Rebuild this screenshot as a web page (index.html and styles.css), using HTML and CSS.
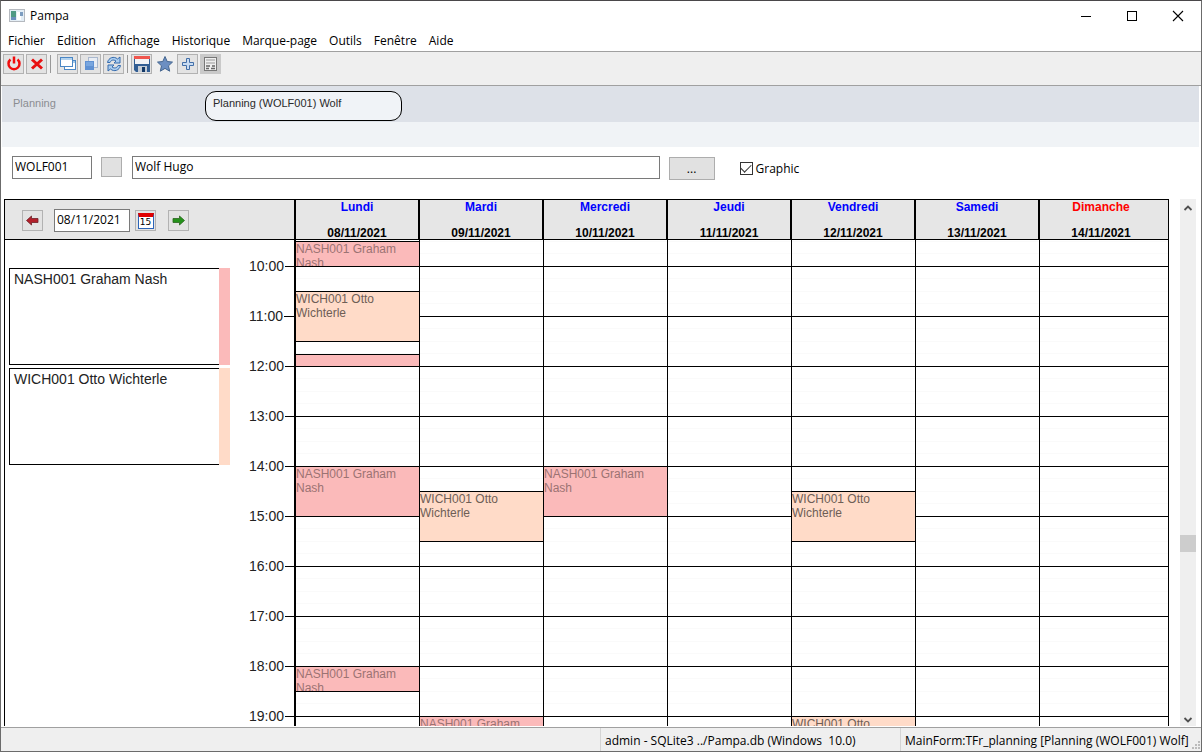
FILE: index.html
```html
<!DOCTYPE html>
<html lang="fr">
<head>
<meta charset="utf-8">
<title>Pampa</title>
<link rel="stylesheet" href="styles.css">
</head>
<body>
<div class="window">
  <header class="titlebar">
    <svg class="app-icon" width="16" height="14" viewBox="0 0 16 14" aria-hidden="true"><rect x=".5" y=".5" width="15" height="12" fill="#e4eef6" stroke="#b5b9bf"/><rect x="2" y="2" width="5" height="9" fill="#4f9a85"/><rect x="2" y="8" width="5" height="3" fill="#6b8fbd"/><rect x="8" y="3" width="4" height="8" fill="#fff"/><rect x="11" y="3" width="3" height="4" fill="#7d9dc0"/></svg>
    <h1 class="title">Pampa</h1>
    <div class="window-buttons">
      <button class="window-button" aria-label="Réduire"><svg width="12" height="12" viewBox="0 0 12 12"><path d="M1 6.500h10" stroke="#000"/></svg></button>
      <button class="window-button" aria-label="Agrandir"><svg width="12" height="12" viewBox="0 0 12 12"><rect x="1.500" y="1.500" width="9" height="9" fill="none" stroke="#000"/></svg></button>
      <button class="window-button" aria-label="Fermer"><svg width="12" height="12" viewBox="0 0 12 12"><path d="M1 1l10 10M11 1L1 11" stroke="#000" stroke-width="1.100"/></svg></button>
    </div>
  </header>

  <nav class="menubar">
    <button class="menu">Fichier</button>
    <button class="menu">Edition</button>
    <button class="menu">Affichage</button>
    <button class="menu">Historique</button>
    <button class="menu">Marque-page</button>
    <button class="menu">Outils</button>
    <button class="menu">Fenêtre</button>
    <button class="menu">Aide</button>
  </nav>

  <div class="toolbar" role="toolbar">
    <button class="tool" aria-label="Quitter"><svg width="18" height="18" viewBox="0 0 18 18"><path d="M5.500 4.500A5.500 5.500 0 1 0 12.500 4.500" fill="none" stroke="#f00d0d" stroke-width="2.500"/><path d="M9 1.500v7" stroke="#f00d0d" stroke-width="2.500"/></svg></button>
    <button class="tool" aria-label="Fermer la fiche"><svg width="18" height="18" viewBox="0 0 18 18"><path d="M4 4.500l10 9M14 4.500l-10 9" stroke="#e81010" stroke-width="3"/></svg></button>
    <span class="separator"></span>
    <button class="tool" aria-label="Fenêtres"><svg width="18" height="18" viewBox="0 0 18 18"><rect x="5.500" y="5.500" width="11" height="9" fill="#fff" stroke="#4b87c5"/><path d="M6 7h10" stroke="#a8cbe9" stroke-width="2"/><rect x="1.500" y="2.500" width="12" height="9" fill="#fff" stroke="#4b87c5"/><path d="M2 4h11" stroke="#b4d3ee" stroke-width="2"/></svg></button>
    <button class="tool" aria-label="Cascade"><svg width="18" height="18" viewBox="0 0 18 18"><rect x="6.500" y="2.500" width="9" height="10" fill="#e8edf4" stroke="#a9b8ce"/><rect x="3" y="6" width="9" height="9" fill="#5f91d3"/><rect x="4" y="7" width="7" height="4" fill="#78a6df"/></svg></button>
    <button class="tool" aria-label="Actualiser"><svg width="18" height="18" viewBox="0 0 18 18"><g fill="#a9ccef" stroke="#356bad" stroke-linejoin="round"><path d="M2.500 7.500C3.500 2.500 9 .8 12.500 4l2.500-2v6H9l2-2C8.500 4.300 6 5 5 7.500z"/><path d="M15.500 10.500c-1 5-6.500 6.700-10 3.500L3 16v-6h6l-2 2c2.500 1.700 5 1 6-1.500z"/></g></svg></button>
    <span class="separator separator-tight"></span>
    <button class="tool" aria-label="Enregistrer"><svg width="18" height="18" viewBox="0 0 18 18"><path d="M1 1h16v16H3l-2-2z" fill="#315d93"/><rect x="2" y="1" width="14" height="8" fill="#f1f2f5"/><rect x="1" y="1" width="16" height="3" fill="#f0564e"/><rect x="5" y="11" width="9" height="6" fill="#c5ccd5"/><rect x="9" y="12" width="3" height="5" fill="#123867"/></svg></button>
    <button class="tool tool-flat" aria-label="Favori"><svg width="18" height="18" viewBox="0 0 18 18"><path d="M9 1.500l2.200 5 5.300.6-4 3.700 1.200 5.400L9 13.400l-4.700 2.800 1.200-5.400-4-3.700 5.300-.6z" fill="#6c8fc2" stroke="#44658f"/></svg></button>
    <button class="tool" aria-label="Ajouter"><svg width="18" height="18" viewBox="0 0 18 18"><path d="M7.500 3.500h3v4h4v3h-4v4h-3v-4h-4v-3h4z" fill="#c9dcf2" stroke="#426fa8"/></svg></button>
    <button class="tool tool-pressed" aria-label="Calculatrice"><svg width="18" height="18" viewBox="0 0 18 18"><rect x="2.500" y="2.500" width="12" height="13" fill="#eee" stroke="#777"/><path d="M4 5h9M4 8h9" stroke="#999"/><path d="M4 11h4M10 11h3M4 13.500h3M9 13.500h4" stroke="#666" stroke-width="1.500"/></svg></button>
  </div>

  <main class="content">
    <div class="tabs">
      <button class="tab">Planning</button>
      <button class="tab tab-active">Planning (WOLF001) Wolf</button>
    </div>
    <div class="tab-strip"></div>

    <form class="person">
      <input class="field field-code" aria-label="Code" value="WOLF001">
      <button class="square" type="button" aria-label="Choisir"></button>
      <input class="field field-name" aria-label="Nom" value="Wolf Hugo">
      <button class="browse" type="button">...</button>
      <label class="check"><input class="check-box" type="checkbox" checked>Graphic</label>
    </form>

    <div class="planner">
      <section class="calendar">
        <div class="date-nav">
          <button class="tool" aria-label="Semaine précédente"><svg width="14" height="12" viewBox="0 0 14 12"><path d="M.5 5.500l5-4.500v2.500H12v4H5.500V10z" fill="#b3202b" stroke="#6e2228" stroke-width=".8"/></svg></button>
          <input class="field field-date" aria-label="Date" value="08/11/2021">
          <button class="tool calendar-button" aria-label="Calendrier"><span class="date-icon">15</span></button>
          <button class="tool next-button" aria-label="Semaine suivante"><svg width="14" height="12" viewBox="0 0 14 12"><path d="M12.500 5.500L7.500 1v2.500H1v4h6.500V10z" fill="#25921b" stroke="#2b6620" stroke-width=".8"/></svg></button>
        </div>
        <div class="day-head"><span class="day-name">Lundi</span><span>08/11/2021</span></div>
        <div class="day-head"><span class="day-name">Mardi</span><span>09/11/2021</span></div>
        <div class="day-head"><span class="day-name">Mercredi</span><span>10/11/2021</span></div>
        <div class="day-head"><span class="day-name">Jeudi</span><span>11/11/2021</span></div>
        <div class="day-head"><span class="day-name">Vendredi</span><span>12/11/2021</span></div>
        <div class="day-head"><span class="day-name">Samedi</span><span>13/11/2021</span></div>
        <div class="day-head day-last"><span class="day-name sunday">Dimanche</span><span>14/11/2021</span></div>

        <div class="side">
          <ul class="people">
            <li class="card card-pink">NASH001 Graham Nash</li>
            <li class="card card-peach">WICH001 Otto Wichterle</li>
          </ul>
          <ol class="hours">
            <li class="hour">10:00</li>
            <li class="hour">11:00</li>
            <li class="hour">12:00</li>
            <li class="hour">13:00</li>
            <li class="hour">14:00</li>
            <li class="hour">15:00</li>
            <li class="hour">16:00</li>
            <li class="hour">17:00</li>
            <li class="hour">18:00</li>
            <li class="hour">19:00</li>
          </ol>
        </div>
        <div class="day day-first">
          <div class="event pink at-0930 half">NASH001 Graham Nash</div>
          <div class="event peach at-1030">WICH001 Otto Wichterle</div>
          <div class="event pink at-1130 quarter"></div>
          <div class="event pink at-1400">NASH001 Graham Nash</div>
          <div class="event pink at-1800 half">NASH001 Graham Nash</div>
        </div>
        <div class="day">
          <div class="event peach at-1430">WICH001 Otto Wichterle</div>
          <div class="event pink at-1900">NASH001 Graham Nash</div>
        </div>
        <div class="day">
          <div class="event pink at-1400">NASH001 Graham Nash</div>
        </div>
        <div class="day"></div>
        <div class="day">
          <div class="event peach at-1430">WICH001 Otto Wichterle</div>
          <div class="event peach at-1900">WICH001 Otto Wichterle</div>
        </div>
        <div class="day"></div>
        <div class="day day-last"></div>
      </section>

      <div class="scrollbar">
        <button class="scroll-button" aria-label="Monter"><svg width="10" height="8" viewBox="0 0 10 8"><path d="M1.500 6L5 2.500 8.500 6" fill="none" stroke="#505050" stroke-width="1.800"/></svg></button>
        <div class="scroll-before"></div>
        <div class="scroll-thumb"></div>
        <div class="scroll-after"></div>
        <button class="scroll-button scroll-down" aria-label="Descendre"><svg width="10" height="8" viewBox="0 0 10 8"><path d="M1.500 2L5 5.500 8.500 2" fill="none" stroke="#505050" stroke-width="1.800"/></svg></button>
      </div>
    </div>
  </main>

  <footer class="statusbar">
    <span class="status"></span>
    <span class="status">admin - SQLite3 ../Pampa.db (Windows&nbsp; 10.0)</span>
    <span class="status">MainForm:TFr_planning [Planning (WOLF001) Wolf]</span>
    <svg class="grip" width="10" height="10" viewBox="0 0 10 10" aria-hidden="true"><path d="M7 0h2v2H7zM7 3h2v2H7zM7 6h2v2H7zM4 3h2v2H4zM4 6h2v2H4zM1 6h2v2H1z" fill="#bbb"/></svg>
  </footer>
</div>
</body>
</html>
```
FILE: styles.css
```css
* {
  box-sizing: border-box;
}

body {
  margin: 0;
  background: #fff;
  color: #000;
  font: 12px/16px "Open Sans", "Noto Sans", sans-serif;
}

button,
input {
  font: inherit;
  color: inherit;
  margin: 0;
  padding: 0;
}

button {
  border: 0;
  background: none;
}

ul,
ol {
  margin: 0;
  padding: 0;
  list-style: none;
}

.window {
  display: flex;
  flex-direction: column;
  height: 100vh;
  border: 1px solid #6b6b6b;
  border-top-color: #4a484a;
}

/* Title bar and menus */
.titlebar {
  display: flex;
  align-items: center;
  flex: none;
  height: 29px;
  padding-left: 8px;
}

.title {
  margin: 0 0 0 5px;
  font-size: 12px;
  font-weight: 400;
}

.window-buttons {
  display: flex;
  margin-left: auto;
}

.window-button {
  display: grid;
  place-items: center;
  width: 46px;
  height: 28px;
}

.menubar {
  display: flex;
  flex: none;
  gap: 12px;
  height: 22px;
  padding: 3px 7px 0;
  align-items: flex-start;
  border-bottom: 1px solid #a0a0a0;
}

/* Toolbar */
.toolbar {
  display: flex;
  flex: none;
  gap: 2px;
  height: 34px;
  padding: 2px;
  background: #efefef;
  border-bottom: 1px solid #a0a0a0;
}

.tool {
  display: grid;
  place-items: center;
  flex: none;
  width: 21px;
  height: 20px;
  background: #e3e3e3;
  border: 1px solid #b2b2b2;
}

.tool-flat {
  background: none;
  border-color: transparent;
}

.tool-pressed {
  background: #c9c9c9;
  border-color: #c9c9c9;
}

.separator {
  flex: none;
  width: 1px;
  height: 18px;
  margin: 1px 4px 0 1px;
  background: #999;
}

.separator-tight {
  margin-right: 1px;
}

/* Tabs */
.content {
  display: flex;
  flex-direction: column;
  flex: 1;
  min-height: 0;
  padding: 0 2px 0 1px;
}

.tabs {
  display: flex;
  flex: none;
  height: 36px;
  padding: 5px 3px 1px;
  background: #dde1e8;
}

.tab {
  display: flex;
  width: 197px;
  height: 30px;
  padding: 4px 7px;
  margin-right: 3px;
  border: 1px solid transparent;
  border-radius: 11px;
  color: #8b8d91;
  font: 11px/15px "Liberation Sans", Arial, sans-serif;
}

.tab-active {
  background: #f0f3f7;
  border-color: #000;
  color: #2a2a2a;
}

.tab-strip {
  flex: none;
  height: 25px;
  background: #f0f3f6;
}

/* Person form */
.person {
  display: flex;
  flex: none;
  align-items: flex-start;
  height: 52px;
  padding: 9px 9px 0 10px;
}

.field {
  height: 23px;
  padding: 0 2px 2px;
  background: #fff;
  border: 1px solid #7a7a7a;
  border-radius: 0;
}

.field-code {
  width: 80px;
}

.square {
  width: 21px;
  height: 20px;
  margin: 1px 10px 0 9px;
  background: #e1e1e1;
  border: 1px solid #adadad;
}

.field-name {
  flex: 528 1 0;
}

.browse {
  width: 46px;
  height: 23px;
  margin: 1px 25px 0 9px;
  background: #e1e1e1;
  border: 1px solid #adadad;
}

.check {
  display: flex;
  align-items: center;
  gap: 3px;
  flex: 456 1 0;
  height: 25px;
}

.check-box {
  display: grid;
  place-items: center;
  appearance: none;
  width: 13px;
  height: 13px;
  border: 1px solid #333;
}

.check-box:checked::before {
  content: "";
  width: 9px;
  height: 5px;
  margin-bottom: 3px;
  border: solid #333;
  border-width: 0 0 1px 1px;
  rotate: -45deg;
}

/* Weekly planning */
.planner {
  display: flex;
  gap: 11px;
  flex: 1;
  min-height: 0;
  padding: 0 3px 0 2px;
}

.calendar {
  display: grid;
  grid-template-columns: 291px repeat(6, 124fr) 130fr;
  grid-template-rows: 41px minmax(0, 1fr);
  flex: 1;
  min-width: 0;
  overflow: hidden;
  font-family: "Liberation Sans", Arial, sans-serif;
}

.date-nav,
.day-head {
  background: #e6e6e6;
  border: solid #000;
  border-width: 1px 0 1px 1px;
}

.date-nav {
  display: flex;
  align-items: flex-start;
  padding: 9px 17px;
  font-family: "Open Sans", "Noto Sans", sans-serif;
}

.date-nav .tool {
  height: 21px;
  margin-top: 1px;
}

.date-nav .field-date {
  width: 76px;
  margin-left: 11px;
}

.date-nav .calendar-button {
  margin-left: 5px;
}

.date-nav .next-button {
  margin-left: 12px;
}

.date-icon {
  width: 16px;
  height: 16px;
  background: #fff;
  border: 1px solid #2d65b8;
  border-top: 4px solid #e00000;
  font: 9px/11px "DejaVu Sans", sans-serif;
}

.day-head {
  display: flex;
  flex-direction: column;
  gap: 12px;
  align-items: center;
  margin-left: -1px;
  padding-right: 1px;
  border-left-width: 2px;
  font-weight: 700;
  line-height: 14px;
}

.day-name {
  color: #00f;
}

.sunday {
  color: #f00;
}

.day-head.day-last {
  padding-right: 6px;
}

.day-last {
  border-right: 1px solid #000;
}

.side {
  display: flex;
  justify-content: space-between;
  min-height: 0;
  border-left: 1px solid #000;
}

.people {
  display: grid;
  gap: 3px;
  align-content: start;
  padding: 28px 0 0 4px;
}

.card {
  position: relative;
  width: 221px;
  height: 97px;
  padding: 2px 4px;
  border: solid #000;
  border-width: 1px 0 1px 1px;
  color: #222;
  font-size: 14px;
}

.card::after {
  content: "";
  position: absolute;
  inset: -1px 0 -1px auto;
  width: 11px;
}

.card-pink::after {
  background: #fbbaba;
}

.card-peach::after {
  background: #ffdbc8;
}

.hours {
  padding-top: 1px;
}

.hour {
  display: flex;
  align-items: center;
  gap: 1px;
  height: 50px;
  color: #222;
  font-size: 14px;
}

.hour::after {
  content: "";
  width: 10px;
  height: 1px;
  background: #000;
}

.day {
  display: grid;
  grid-template-rows: repeat(20, 25px);
  min-width: 0;
  min-height: 0;
  padding-top: 1px;
  border-left: 1px solid #000;
  overflow: hidden;
  background:
    linear-gradient(#000 1px, transparent 1px) 0 26px / 100% 50px,
    linear-gradient(#fafafa 1px, transparent 1px) 0 1px / 100% 25px,
    linear-gradient(#fafafa 1px, transparent 1px) 0 13px / 100% 25px;
}

.day-first {
  border-left-width: 2px;
  margin-left: -1px;
}

.day.day-last {
  border-right: 1px solid #000;
}

.event {
  grid-row-end: span 2;
  grid-column: 1;
  margin-bottom: -1px;
  border: solid #000;
  border-width: 1px 0;
  overflow: hidden;
  line-height: 14px;
}

.half,
.quarter {
  grid-row-end: span 1;
}

.quarter {
  align-self: end;
  height: 13px;
}

.pink {
  background: #fbbaba;
  color: #9b7373;
}

.peach {
  background: #ffdbc8;
  color: #6e5e56;
}

.at-0930 { grid-row-start: 1; }
.at-1030 { grid-row-start: 3; }
.at-1130 { grid-row-start: 5; }
.at-1400 { grid-row-start: 10; }
.at-1430 { grid-row-start: 11; }
.at-1800 { grid-row-start: 18; }
.at-1900 { grid-row-start: 20; }

/* Scroll bar */
.scrollbar {
  display: flex;
  flex-direction: column;
  width: 16px;
  background: #efefef;
}

.scroll-button {
  display: grid;
  place-items: center;
  height: 17px;
}

.scroll-down {
  height: 13px;
}

.scroll-before {
  flex: 319;
}

.scroll-thumb {
  height: 17px;
  background: #cdcdcd;
}

.scroll-after {
  flex: 161;
}

/* Status bar */
.statusbar {
  display: grid;
  grid-template-columns: 1fr 300px 301px;
  flex: none;
  position: relative;
  height: 24px;
  margin-top: 1px;
  background: #efefef;
  border-top: 1px solid #a0a0a0;
}

.status {
  padding: 5px 4px 0;
  border-left: 1px solid #d4d4d4;
  white-space: nowrap;
}

.status:first-child {
  border-left: 0;
}

.grip {
  position: absolute;
  right: 0;
  bottom: 0;
}
```
